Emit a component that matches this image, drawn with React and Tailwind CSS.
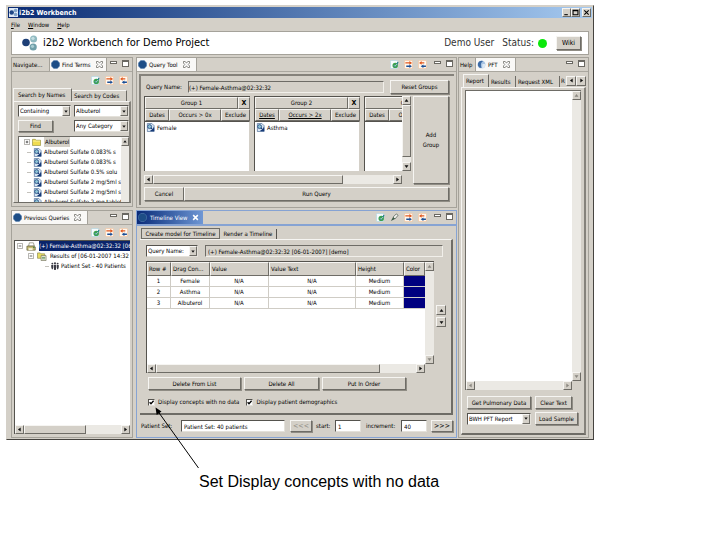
import React from "react";

const raised =
  "border border-t-[#f6f5f2] border-l-[#f6f5f2] border-r-[#6e6c66] border-b-[#6e6c66] bg-[#d4d0c8]";
const sunken =
  "border border-t-[#6e6c66] border-l-[#6e6c66] border-r-[#f1efea] border-b-[#f1efea]";
const field = "border border-t-[#55534e] border-l-[#55534e] border-r-[#e4e1da] border-b-[#e4e1da] bg-white";

function Btn({ className = "", children, ...rest }) {
  return (
    <button
      type="button"
      className={`${raised} shrink-0 whitespace-nowrap shadow-[1px_1px_0_#8f8c84] ${className}`}
      {...rest}
    >
      {children}
    </button>
  );
}

const arrows = {
  up: "M4.5 2.5 7 6H2z",
  down: "M2 3h5L4.5 6.5z",
  left: "M2.5 4.5 6 2v5z",
  right: "M6.5 4.5 3 2v5z",
};

function Arrow({ dir, dim }) {
  return (
    <svg viewBox="0 0 9 9" className="size-[7px]">
      <path d={arrows[dir]} fill={dim ? "#8a8780" : "#111"} />
    </svg>
  );
}

function ArrowBtn({ dir, dim, className = "size-[9px]" }) {
  return (
    <button
      type="button"
      aria-label={dir}
      className={`${raised} flex shrink-0 items-center justify-center ${className}`}
    >
      <Arrow dir={dir} dim={dim} />
    </button>
  );
}

function HScroll({ thumb, dim, className = "" }) {
  return (
    <div className={`flex h-[9px] shrink-0 bg-[#ebe9e4] ${className}`}>
      <ArrowBtn dir="left" dim={dim} />
      <div className="flex min-w-0 flex-1">{thumb && <div className={`${raised} ${thumb}`} />}</div>
      <ArrowBtn dir="right" dim={dim} />
    </div>
  );
}

function VScroll({ thumb, dim, className = "" }) {
  return (
    <div className={`flex w-[9px] shrink-0 flex-col bg-[#ebe9e4] ${className}`}>
      <ArrowBtn dir="up" dim={dim} />
      <div className="flex min-h-0 flex-1 flex-col">{thumb && <div className={`${raised} ${thumb}`} />}</div>
      <ArrowBtn dir="down" dim={dim} />
    </div>
  );
}

function Combo({ label, value, className = "" }) {
  return (
    <div className={`${field} flex h-3 shrink-0 overflow-hidden ${className}`}>
      <select aria-label={label} className="min-w-0 flex-1 appearance-none overflow-hidden bg-white pl-px leading-[10px] outline-none">
        <option>{value}</option>
      </select>
      <span className={`${raised} flex w-2 shrink-0 items-center justify-center`}>
        <Arrow dir="down" />
      </span>
    </div>
  );
}

function Hex({ className = "" }) {
  return (
    <svg viewBox="0 0 10 10" className={`size-[9px] shrink-0 ${className}`}>
      <path d="M3 .6h4L9.6 3.4v3.2L7 9.4H3L.4 6.6V3.4z" fill="#1d4d86" stroke="#5f86b5" strokeWidth=".6" />
    </svg>
  );
}

function Swirl() {
  return (
    <svg viewBox="0 0 10 10" className="size-[9px] shrink-0">
      <circle cx="5" cy="5" r="4.3" fill="#a9c4e2" />
      <path d="M1 6A4.3 4.3 0 0 1 7 1.2C4.500 2.500 3.500 5 5 8.800A4.300 4.300 0 0 1 1 6z" fill="#3d6ba5" />
      <path d="M6 4.500h3.200A4.200 4.200 0 0 1 5.800 9.200z" fill="#dfeaf5" />
    </svg>
  );
}

function CloseX({ light }) {
  return light ? (
    <svg viewBox="0 0 9 9" className="size-[7px] shrink-0">
      <path d="M1.500 1.500l6 6M7.500 1.500l-6 6" stroke="#fff" strokeWidth="2" />
    </svg>
  ) : (
    <svg viewBox="0 0 9 9" className="size-[7px] shrink-0">
      <path
        d="M.6.600h2.200L4.500 2.800 6.200.600h2.200v2L6.700 4.500l1.700 1.900v2H6.200L4.500 6.200 2.800 8.400H.600v-2l1.700-1.900L.600 2.600z"
        fill="#fff"
        stroke="#6a6862"
        strokeWidth="1"
      />
    </svg>
  );
}

function MinMax() {
  return (
    <div className="flex gap-[5px]">
      <button type="button" aria-label="Minimize" className="mt-px h-[3px] w-[7px] border border-[#6a6862] bg-white" />
      <button type="button" aria-label="Maximize" className="h-[7px] w-[7px] border border-t-2 border-[#6a6862] bg-white" />
    </div>
  );
}

function RefreshIcon() {
  return (
    <svg viewBox="0 0 10 10" className="size-[9px]">
      <rect x=".5" y=".5" width="8" height="9" rx="1" fill="#f6fbfd" stroke="#a9d3e2" strokeWidth=".7" />
      <circle cx="5.800" cy="6" r="3" fill="#3da34c" />
      <path d="M4 5.600l1.600 1.700L9 2.400" fill="none" stroke="#1f7d8c" strokeWidth="1.300" />
      <path d="M4.600 6l1 1L7.500 4.600" fill="none" stroke="#e6f7df" strokeWidth=".8" />
    </svg>
  );
}

function RightIcon() {
  return (
    <svg viewBox="0 0 10 10" className="size-[9px]">
      <rect x=".4" y=".4" width="9.200" height="9.200" rx="1.500" fill="#fff8ef" stroke="#f3b98c" strokeWidth=".7" />
      <path d="M1.500 2.500h4.500V1.200L9 3.200 6 5.200V4H1.500z" fill="#e2581f" />
      <path d="M2.500 6.200H6V5l2.800 2L6 9V7.700H2.500z" fill="#1c4f96" />
    </svg>
  );
}

function LeftIcon() {
  return (
    <svg viewBox="0 0 10 10" className="size-[9px]">
      <rect x=".4" y=".4" width="9.200" height="9.200" rx="1.500" fill="#fff8ef" stroke="#f3b98c" strokeWidth=".7" />
      <path d="M7 2.500H4V1.200L1.200 3.200 4 5.200V4h3z" fill="#e2581f" />
      <path d="M8.800 6.200H6V5L3 7l3 2V7.700h2.800z" fill="#1c4f96" />
    </svg>
  );
}

function PenIcon() {
  return (
    <svg viewBox="0 0 10 10" className="size-[9px]">
      <path d="M3.500 4.500L7 1l2 1.500-3.500 4.200z" fill="#f4f4f0" stroke="#4c5a4f" strokeWidth=".8" />
      <path d="M3.500 4.500L1 9l4.500-2.300z" fill="#3b5a46" />
    </svg>
  );
}

function ToolIcons({ pen }) {
  return (
    <div className="flex gap-[5px]">
      <button type="button" aria-label="Refresh"><RefreshIcon /></button>
      {pen && <button type="button" aria-label="Edit"><PenIcon /></button>}
      <button type="button" aria-label="Forward"><RightIcon /></button>
      <button type="button" aria-label="Back"><LeftIcon /></button>
    </div>
  );
}

function ConceptIcon() {
  return (
    <svg viewBox="0 0 10 10" className="size-[9px] shrink-0">
      <path d="M1.500.5h5L9 3v6.500H1.500z" fill="#dbe8f4" stroke="#51719b" strokeWidth=".8" />
      <circle cx="4" cy="4" r="2.200" fill="#8fc3d4" stroke="#1f4580" strokeWidth=".9" />
      <path d="M5.500 5.500l3 3M5 8.500h3.500V5" fill="none" stroke="#173a78" strokeWidth="1.300" />
    </svg>
  );
}

function FolderIcon() {
  return (
    <svg viewBox="0 0 10 9" className="h-2 w-[9px] shrink-0">
      <path d="M.5 1.500h3.200l.8 1h5v6h-9z" fill="#f0dc50" stroke="#8f8a3a" strokeWidth=".7" />
      <path d="M1 3.500h8" stroke="#fff7b0" strokeWidth=".8" />
    </svg>
  );
}

function PrinterIcon() {
  return (
    <svg viewBox="0 0 12 11" className="h-[9px] w-[10px] shrink-0">
      <path d="M4 1h5l1 4H3z" fill="#fff" stroke="#6b6b50" strokeWidth=".7" />
      <path d="M1 5h9l1.200 1v4H1z" fill="#c5bb74" stroke="#5c5838" strokeWidth=".8" />
      <path d="M3 7.500h5V10H3z" fill="#f7f3d8" />
      <circle cx="9.500" cy="6.500" r="1" fill="#3c7a45" />
    </svg>
  );
}

function ResultsIcon() {
  return (
    <svg viewBox="0 0 11 10" className="h-[9px] w-[10px] shrink-0">
      <path d="M.5 1h3l1 1h4v5h-8z" fill="#e6dc62" stroke="#87834a" strokeWidth=".7" />
      <path d="M4.500 4h5.500v5.500H4.500z" fill="#f6f5e6" stroke="#66664c" strokeWidth=".7" />
      <path d="M5.500 6h3.500M5.500 7.600h3.500" stroke="#3f7a45" strokeWidth=".8" />
    </svg>
  );
}

function PeopleIcon() {
  return (
    <svg viewBox="0 0 10 10" className="size-2 shrink-0" fill="#3a3a44">
      <circle cx="1.700" cy="2" r="1.200" />
      <circle cx="5" cy="1.500" r="1.300" />
      <circle cx="8.300" cy="2" r="1.200" />
      <path d="M.3 3.600h2.400v3L2.300 9H1.100L.3 6.500zM3.500 3.300h3v4L6 10H4l-.5-2.700zM7.300 3.600h2.400v2.900L8.900 9H7.700l-.4-2.400z" />
    </svg>
  );
}

function Expander({ minus }) {
  return (
    <svg viewBox="0 0 7 7" className="size-[6px] shrink-0">
      <path d="M.5.500h6v6h-6z" fill="#fff" stroke="#8c8a84" strokeWidth=".8" />
      <path d={minus ? "M2 3.500h3" : "M2 3.500h3M3.500 2v3"} stroke="#222" strokeWidth=".8" />
    </svg>
  );
}

function Panel({ tabs, tools, className = "", children }) {
  return (
    <section className={`flex flex-col border border-[#a5a29a] bg-[#d4d0c8] ${className}`}>
      <div className="flex h-[14px] shrink-0 items-stretch border-b border-[#aaa79f]">
        {tabs}
        <div className="ml-auto flex items-start gap-[7px] pt-[2px] pr-[3px]">
          {tools}
          <MinMax />
        </div>
      </div>
      {children}
    </section>
  );
}

function ActiveTab({ icon, children, className = "" }) {
  return (
    <div className={`flex items-center gap-[2px] border-r border-[#a5a29a] bg-[#f9f8f6] px-px whitespace-nowrap ${className}`}>
      {icon}
      <span>{children}</span>
      <button type="button" aria-label="Close" className="ml-[3px]"><CloseX /></button>
    </div>
  );
}

function SubTab({ active, children, className = "" }) {
  return (
    <button
      type="button"
      className={`shrink-0 border-r border-[#6e6c66] text-left whitespace-nowrap ${
        active ? "h-[13px] border-t border-l border-t-[#f6f5f2] border-l-[#f6f5f2]" : "h-[11px]"
      } ${className}`}
    >
      {children}
    </button>
  );
}

const terms = [
  "Albuterol Sulfate 0.083% s",
  "Albuterol Sulfate 0.083% s",
  "Albuterol Sulfate 0.5% solu",
  "Albuterol Sulfate 2 mg/5ml s",
  "Albuterol Sulfate 2 mg/5ml s",
  "Albuterol Sulfate 2 mg tablet",
];

function FindTerms() {
  return (
    <Panel
      className="h-[150px]"
      tabs={
        <>
          <button type="button" className="w-[38px] shrink-0 border-r border-[#a5a29a] pl-px text-left">Navigate...</button>
          <ActiveTab className="w-[57px]" icon={<Hex />}>Find Terms</ActiveTab>
        </>
      }
    >
      <div className="flex h-4 shrink-0 items-center justify-end pr-1">
        <ToolIcons />
      </div>
      <div className="flex shrink-0 items-end pl-px">
        <SubTab active className="w-[59px] pl-1">Search by Names</SubTab>
        <SubTab className="w-[55px] border-t border-t-[#f6f5f2] pl-[2px]">Search by Codes</SubTab>
      </div>
      <div className="mx-px mb-[3px] flex min-h-0 flex-1 flex-col gap-[3px] border-t border-r-2 border-b border-l border-t-[#f6f5f2] border-r-[#85827b] border-b-[#6e6c66] border-l-[#f6f5f2] pt-[3px] pl-1">
        <div className="flex justify-between">
          <Combo label="Match" value="Containing" className="w-[53px]" />
          <Combo label="Term" value="Albuterol" className="w-[55px]" />
        </div>
        <div className="flex justify-between">
          <Btn className="h-3 w-[35px]">Find</Btn>
          <Combo label="Category" value="Any Category" className="w-[55px]" />
        </div>
        <div className="mt-px flex min-h-0 flex-1 overflow-hidden border-t border-l border-[#6e6c66] bg-white">
          <ul className="min-w-0 flex-1 overflow-hidden pl-[5px]">
            <li className="flex h-[10px] items-center gap-[2px] whitespace-nowrap">
              <Expander />
              <FolderIcon />
              <span className="ml-px bg-[#d4d0c8] px-px">Albuterol</span>
            </li>
            {terms.map((t, i) => (
              <li key={i} className="flex h-[10px] items-center gap-[2px] pl-[3px] whitespace-nowrap">
                <span className="h-px w-1 shrink-0 bg-[#c4c2bc]" />
                <ConceptIcon />
                <span>{t}</span>
              </li>
            ))}
          </ul>
          <div className="flex w-2 shrink-0 flex-col bg-[#ebe9e4]">
            <ArrowBtn dir="up" className="h-[9px] w-2" />
          </div>
        </div>
      </div>
    </Panel>
  );
}

function PreviousQueries() {
  return (
    <Panel
      className="min-h-[228px] flex-1"
      tabs={<ActiveTab className="w-[76px]" icon={<Hex />}>Previous Queries</ActiveTab>}
    >
      <div className="flex h-[15px] shrink-0 items-center justify-end pr-1">
        <ToolIcons />
      </div>
      <div className="mx-[2px] mb-[3px] flex min-h-0 flex-1 flex-col border-t border-l border-[#55534e] bg-white">
        <ul className="flex-1 overflow-hidden">
          <li className="flex h-[10px] items-center gap-[3px] pl-[2px] whitespace-nowrap">
            <Expander minus />
            <PrinterIcon />
            <span className="flex-1 overflow-hidden bg-[#0a246a] text-white">(+) Female-Asthma@02:32:32 [06-01-2007]</span>
          </li>
          <li className="flex h-[10px] items-center gap-[3px] overflow-hidden pl-[13px] whitespace-nowrap">
            <Expander minus />
            <ResultsIcon />
            <span>Results of [06-01-2007 14:32</span>
          </li>
          <li className="flex h-[10px] items-center gap-[2px] overflow-hidden pl-[30px] whitespace-nowrap">
            <span className="h-px w-1 shrink-0 bg-[#c4c2bc]" />
            <PeopleIcon />
            <span>Patient Set - 40 Patients</span>
          </li>
        </ul>
        <HScroll thumb="w-[62px]" />
      </div>
    </Panel>
  );
}

function Group({ title, occurs, concept, linked }) {
  const u = linked ? "underline" : "";
  return (
    <div className="flex w-[106px] shrink-0 flex-col border-t border-l border-[#55534e]">
      <div className="flex h-3">
        <div className={`${raised} flex-1 text-center`}>{title}</div>
        <button type="button" aria-label="Remove group" className={`${raised} w-3 text-[7px] font-bold`}>X</button>
      </div>
      <div className="flex h-3">
        <button type="button" className={`${raised} w-6 ${u}`}>Dates</button>
        <button type="button" className={`${raised} flex-1 ${u}`}>{occurs}</button>
        <button type="button" className={`${raised} w-[29px]`}>Exclude</button>
      </div>
      <div className="flex flex-1 items-start gap-[2px] border-t border-r border-t-[#55534e] border-r-[#d4d0c8] bg-white pt-px pl-px">
        {concept && (
          <>
            <ConceptIcon />
            <span>{concept}</span>
          </>
        )}
      </div>
    </div>
  );
}

function QueryTool() {
  return (
    <Panel
      className="h-[151px]"
      tabs={<ActiveTab className="w-[60px]" icon={<Hex />}>Query Tool</ActiveTab>}
      tools={<ToolIcons />}
    >
      <div className="mx-[2px] mt-[2px] mb-[2px] flex min-h-0 flex-1 flex-col border-t-2 border-l-2 border-[#85827b] py-1 pr-[5px] pl-[3px]">
        <div className="flex h-[14px] shrink-0 items-center">
          <label htmlFor="qt-name" className="w-11 pl-[2px] whitespace-nowrap">Query Name:</label>
          <input
            id="qt-name"
            readOnly
            defaultValue="(+) Female-Asthma@02:32:32"
            className={`${sunken} h-3 min-w-0 flex-1 bg-[#d4d0c8] outline-none`}
          />
          <Btn className="ml-[6px] h-[14px] w-[59px]">Reset Groups</Btn>
        </div>
        <div className="mt-[2px] flex min-h-0 flex-1">
          <div className="flex min-w-0 flex-1 flex-col">
            <div className="flex min-h-0 flex-1">
              <div className="flex min-w-0 flex-1 gap-1 overflow-hidden">
                <Group title="Group 1" occurs="Occurs > 0x" concept="Female" />
                <Group title="Group 2" occurs="Occurs > 2x" concept="Asthma" linked />
                <Group title="Group 3" occurs="Occurs > 0x" />
              </div>
              <VScroll thumb="h-[52px]" />
            </div>
            <HScroll thumb="w-[79%]" className="mt-1 mr-[9px]" />
          </div>
          <Btn className="ml-[2px] w-9">Add<br />Group</Btn>
        </div>
        <div className="mt-[3px] flex h-[14px] shrink-0">
          <Btn className="w-10">Cancel</Btn>
          <Btn className="flex-1">Run Query</Btn>
        </div>
      </div>
    </Panel>
  );
}

const rows = ["Female", "Asthma", "Albuterol"];
const th = `${raised} overflow-hidden px-px text-left font-normal whitespace-nowrap`;
const td = "border-r border-b border-[#cfccc5] text-center";

function Timeline() {
  return (
    <section className="flex min-h-[228px] flex-1 flex-col border border-[#86a3d3] bg-[#d4d0c8]">
      <div className="flex h-[15px] shrink-0 items-stretch border-b-2 border-[#86a3d3]">
        <div className="flex w-[66px] items-center gap-[3px] bg-linear-to-r from-[#0a2a78] to-[#6f97d4] pl-px whitespace-nowrap text-white">
          <Hex />
          <span>Timeline View</span>
          <button type="button" aria-label="Close" className="ml-[2px]"><CloseX light /></button>
        </div>
        <div className="ml-auto flex items-start gap-[7px] pt-[2px] pr-[3px]">
          <ToolIcons pen />
          <MinMax />
        </div>
      </div>
      <div className="mt-[2px] flex shrink-0 items-end pl-1">
        <button type="button" className="h-[11px] w-[79px] border border-[#6e6c66] leading-[9px] whitespace-nowrap">
          Create model for Timeline
        </button>
        <button type="button" className="h-[10px] w-[57px] border-r border-[#55534e] text-center whitespace-nowrap">
          Render a Timeline
        </button>
      </div>
      <div className="mx-[3px] flex flex-1 flex-col border-t border-r-2 border-b-2 border-t-[#f6f5f2] border-r-[#6e6c66] border-b-[#6e6c66] pl-[6px]">
        <div className="mt-[5px] mr-2 flex gap-[7px]">
          <Combo label="Query field" value="Query Name:" className="w-[52px]" />
          <input
            aria-label="Query name"
            readOnly
            defaultValue="(+) Female-Asthma@02:32:32 [06-01-2007] [demo]"
            className={`${sunken} h-3 min-w-0 flex-1 bg-[#d4d0c8] pl-[2px] outline-none`}
          />
        </div>
        <div className="mt-1 mr-1 flex h-[112px] gap-[2px]">
          <div className="flex min-w-0 flex-1 flex-col border-t border-l border-[#55534e]">
            <div className="flex min-h-0 flex-1">
              <div className="min-w-0 flex-1 bg-white">
                <table className="w-full table-fixed border-separate border-spacing-0">
                  <colgroup>
                    <col className="w-6" />
                    <col className="w-[39px]" />
                    <col className="w-[59px]" />
                    <col />
                    <col className="w-12" />
                    <col className="w-[21px]" />
                  </colgroup>
                  <thead>
                    <tr className="h-[14px]">
                      <th className={th}>Row #</th>
                      <th className={th}>Drag Con...</th>
                      <th className={th}>Value</th>
                      <th className={th}>Value Text</th>
                      <th className={th}>Height</th>
                      <th className={th}>Color</th>
                    </tr>
                  </thead>
                  <tbody>
                    {rows.map((name, i) => (
                      <tr key={name} className="h-[11px]">
                        <td className={td}>{i + 1}</td>
                        <td className={td}>{name}</td>
                        <td className={td}>N/A</td>
                        <td className={td}>N/A</td>
                        <td className={td}>Medium</td>
                        <td className="border-b border-[#cfccc5] bg-[#000080] bg-clip-padding" />
                      </tr>
                    ))}
                  </tbody>
                </table>
              </div>
              <VScroll dim />
            </div>
            <HScroll thumb="w-[86%]" className="mr-[9px]" />
          </div>
          <div className="flex flex-col justify-center gap-[2px] pr-px pb-[2px]">
            <ArrowBtn dir="up" className="size-[10px]" />
            <ArrowBtn dir="down" className="size-[10px]" />
          </div>
        </div>
        <div className="mt-1 flex gap-[3px] pl-[2px]">
          <Btn className="h-[13px] w-[93px]">Delete From List</Btn>
          <Btn className="h-[13px] w-[75px]">Delete All</Btn>
          <Btn className="h-[13px] w-[84px]">Put In Order</Btn>
        </div>
        <div className="mt-[7px] flex items-center gap-[7px] pl-[2px]">
          <Check>Display concepts with no data</Check>
          <Check>Display patient demographics</Check>
        </div>
      </div>
      <div className="flex h-[22px] shrink-0 items-center pr-[3px] pl-1">
        <label htmlFor="pset" className="w-10 whitespace-nowrap">Patient Set:</label>
        <input id="pset" defaultValue="Patient Set: 40 patients" className={`${field} h-3 min-w-0 flex-1 pl-[2px] outline-none`} />
        <Btn disabled className="ml-[5px] h-3 w-[22px] text-[7px] text-[#8f8c84]">&lt;&lt;&lt;</Btn>
        <label htmlFor="start" className="ml-1 w-[19px]">start:</label>
        <input id="start" defaultValue="1" className={`${field} h-3 w-[26px] pl-[2px] outline-none`} />
        <label htmlFor="inc" className="ml-[5px] w-[35px] whitespace-nowrap">increment:</label>
        <input id="inc" defaultValue="40" className={`${field} h-3 w-[26px] pl-[2px] outline-none`} />
        <Btn className="ml-1 h-3 w-[22px] text-[7px]">&gt;&gt;&gt;</Btn>
      </div>
    </section>
  );
}

function Check({ children }) {
  return (
    <label className="flex items-center gap-[3px] whitespace-nowrap">
      <span className="grid size-[7px]">
        <input
          type="checkbox"
          defaultChecked
          className="peer col-start-1 row-start-1 size-[7px] appearance-none border border-t-[#55534e] border-r-[#e4e1da] border-b-[#e4e1da] border-l-[#55534e] bg-white"
        />
        <svg viewBox="0 0 7 7" className="pointer-events-none invisible col-start-1 row-start-1 size-[7px] peer-checked:visible">
          <path d="M1.600 3.200L3 4.800l2.600-3" fill="none" stroke="#000" strokeWidth="1.300" />
        </svg>
      </span>
      {children}
    </label>
  );
}

function Pft() {
  return (
    <Panel
      className="w-[131px] shrink-0"
      tabs={
        <>
          <button type="button" className="w-[17px] shrink-0 border-r border-[#a5a29a] pl-px text-left">Help</button>
          <ActiveTab className="w-10" icon={<Swirl />}>PFT</ActiveTab>
        </>
      }
    >
      <div className="mt-[2px] flex shrink-0 items-end overflow-hidden pl-1">
        <SubTab active className="w-[26px] pl-[2px]">Report</SubTab>
        <SubTab className="w-[27px] pl-[2px]">Results</SubTab>
        <SubTab className="w-11 pl-[2px]">Request XML</SubTab>
        <span className="h-[11px] w-[6px] overflow-hidden pl-px">R</span>
        <div className="flex self-center">
          <ArrowBtn dir="left" className="size-[10px]" />
          <ArrowBtn dir="right" className="size-[10px]" />
        </div>
      </div>
      <div className="mx-[2px] mb-[2px] flex flex-1 flex-col border-t border-r-2 border-b-2 border-l border-t-[#f6f5f2] border-r-[#85827b] border-b-[#6e6c66] border-l-[#f6f5f2] px-[3px] pt-[2px]">
        <div className="flex flex-1 flex-col border-t border-l border-[#6e6c66]">
          <div className="flex flex-1">
            <textarea aria-label="Report" className="min-w-0 flex-1 resize-none bg-white outline-none" />
            <VScroll dim />
          </div>
          <HScroll dim className="mr-[9px]" />
        </div>
        <div className="mt-[6px] mb-2 grid grid-cols-[64px_auto] items-center justify-start gap-x-1 gap-y-[3px] pl-[2px]">
          <Btn className="h-[13px]">Get Pulmonary Data</Btn>
          <Btn className="h-[13px] w-[37px]">Clear Text</Btn>
          <Combo label="Report type" value="BWH PFT Report" />
          <Btn className="h-[13px] w-[43px]">Load Sample</Btn>
        </div>
      </div>
    </Panel>
  );
}

function WinBtn({ label, children }) {
  return (
    <button type="button" aria-label={label} className={`${raised} flex h-[9px] w-[9px] items-center justify-center`}>
      <svg viewBox="0 0 8 8" className="size-[7px]" fill="none" stroke="#000" strokeWidth="1.200">
        {children}
      </svg>
    </button>
  );
}

export default function App() {
  return (
    <div className="relative bg-white pt-[5px] pb-10 font-['DejaVu_Sans_Condensed','DejaVu_Sans',sans-serif] text-[6px] leading-[10px] text-black">
      <div className="mr-[126px] ml-[6px] border border-t-[#d4d0c8] border-r-[#45433f] border-b-[#45433f] border-l-[#d4d0c8] bg-[#d4d0c8] p-px">
        <div className="flex h-[11px] items-center bg-linear-to-r from-[#0a2a72] to-[#a6caf0] px-px text-white">
          <svg viewBox="0 0 10 10" className="size-[9px]">
            <rect width="10" height="10" fill="#dfe9f5" />
            <circle cx="3" cy="5" r="2.500" fill="#1c4585" />
            <circle cx="7.300" cy="2.700" r="2" fill="#7fa3c9" />
            <circle cx="7.300" cy="7.300" r="2" fill="#7fa3c9" />
          </svg>
          <span className="ml-px text-[7px] font-bold">i2b2 Workbench</span>
          <div className="ml-auto flex">
            <WinBtn label="Minimize"><path d="M1.500 6.500h4" /></WinBtn>
            <WinBtn label="Maximize"><path d="M1.200 1.500h5.600v5H1.200zM1.200 2h5.600" /></WinBtn>
            <span className="w-[2px]" />
            <WinBtn label="Close"><path d="M1.500 1.500l5 5M6.500 1.500l-5 5" /></WinBtn>
          </div>
        </div>
        <nav className="flex h-[13px] items-center gap-2 pl-[3px]">
          <button type="button"><u>F</u>ile</button>
          <button type="button"><u>W</u>indow</button>
          <button type="button"><u>H</u>elp</button>
        </nav>
        <header className="mx-[3px] flex h-6 items-center border border-[#a5a29a] bg-white pr-[7px] pl-[10px] text-[11px] leading-4">
          <svg viewBox="0 0 16 16" className="size-[16px]">
            <circle cx="4" cy="7.500" r="3.800" fill="#1d3f77" />
            <circle cx="11.600" cy="4" r="3.500" fill="#8fb9c0" />
            <circle cx="11" cy="3.300" r="1.600" fill="#c3dde0" />
            <circle cx="11.200" cy="12" r="3.600" fill="#6f9fa9" />
            <circle cx="10.500" cy="11.300" r="1.600" fill="#a9cdd2" />
          </svg>
          <h1 className="ml-[5px] whitespace-nowrap text-black">i2b2 Workbench for Demo Project</h1>
          <span className="ml-auto text-[10px] text-[#333]">Demo User</span>
          <span className="ml-2 text-[10px] text-[#333]">Status:</span>
          <span className="ml-1 size-[9px] rounded-full bg-[#0be80b]" />
          <Btn className="ml-[9px] h-[14px] w-[25px] text-[7px] leading-[10px]">Wiki</Btn>
        </header>
        <main className="flex gap-px px-[3px] pt-[2px]">
          <div className="flex min-w-0 flex-1 gap-[3px]">
            <div className="flex w-[122px] shrink-0 flex-col gap-[3px]">
              <FindTerms />
              <PreviousQueries />
            </div>
            <div className="flex min-w-0 flex-1 flex-col gap-[2px]">
              <QueryTool />
              <Timeline />
            </div>
          </div>
          <Pft />
        </main>
      </div>
      <svg viewBox="0 0 50 68" className="absolute top-[403px] left-[152px] h-[68px] w-[50px]">
        <path d="M5 7l41.500 58" stroke="#000" strokeWidth="1" />
        <path d="M3.500 4.500l1.200 7.500 4.800-3.500z" fill="#000" />
      </svg>
      <p className="mt-8 ml-[199px] font-['Liberation_Sans',Arial,sans-serif] text-[16px] leading-5 whitespace-nowrap text-black">
        Set Display concepts with no data
      </p>
    </div>
  );
}
